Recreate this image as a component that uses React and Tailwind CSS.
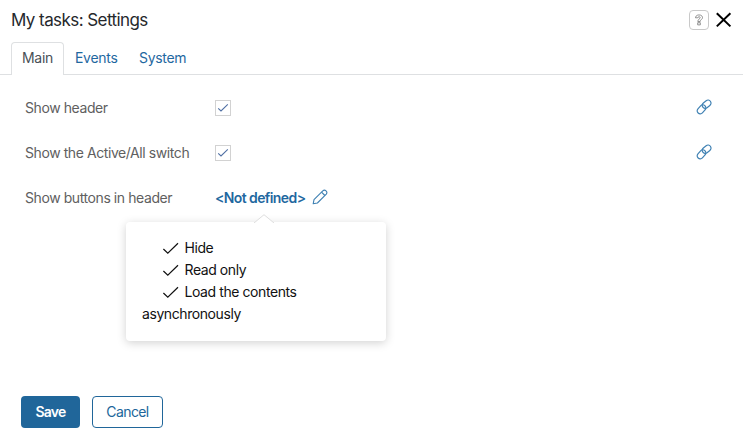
import React from "react";

function Checkbox() {
  return (
    <span className="flex h-4 w-4 items-center justify-center border border-[#d2d2d2] bg-white">
      <svg width="12" height="12" viewBox="0 0 12 12" fill="none" stroke="#5070a4" strokeWidth="1.1">
        <path d="M1.2 6.3 4 9 10.8 2.3" />
      </svg>
    </span>
  );
}

function LinkIcon() {
  return (
    <svg className="-mt-0.5" width="16" height="16" viewBox="0 0 16 16" fill="none" stroke="#3f81b3" strokeWidth="1.2">
      <rect x="-5" y="-3" width="10" height="6" rx="3" transform="translate(5.5 10.3) rotate(-48)" />
      <rect x="-4.8" y="-3" width="9.6" height="6" rx="3" transform="translate(10.6 5.2) rotate(-38)" />
    </svg>
  );
}

function PencilIcon() {
  return (
    <svg className="-mt-0.5" width="16" height="16" viewBox="0 0 16 16" fill="none" stroke="#3f81b3" strokeWidth="1.1" strokeLinejoin="round">
      <path d="M1.2 14.8 2 10.6 10.8 1.8Q12.4.3 14 1.8T14.3 5.1L5.4 14Z" />
      <path d="M9.5 3.1 12.9 6.5" />
    </svg>
  );
}

function Tick() {
  return (
    <svg className="mr-[5.5px] ml-5 inline-block align-[-3px]" width="17" height="14" viewBox="0 0 17 14" fill="none" stroke="#111" strokeWidth="1.2">
      <path d="M1.4 7 5.8 11.2 16 1.2" />
    </svg>
  );
}

function Row({ label, children, link }) {
  return (
    <div className="flex h-[45px] items-center pr-[31px] pl-[25px]">
      <span className="w-[190px] whitespace-nowrap">{label}</span>
      <div className="flex flex-1 items-center">{children}</div>
      {link && <LinkIcon />}
    </div>
  );
}

export default function App() {
  return (
    <div className="flex h-[437px] w-[743px] flex-col overflow-hidden bg-white font-['Inter',sans-serif] text-sm tracking-[-0.42px] text-[#606060]">
      <header className="flex h-[42px] items-center justify-between pr-[11px] pb-1 pl-[11px]">
        <h1 className="pt-0.5 text-[17px] tracking-[-0.57px] text-[#25282c]">My tasks: Settings</h1>
        <div className="flex items-center gap-[7px] pt-0.5">
          <span className="flex h-5 w-5 items-center justify-center rounded border border-[#c9c9c9]">
            <svg width="10" height="12" viewBox="0 0 10 12" fill="none" stroke="#666" strokeWidth=".7">
              <path d="M1.5 3.8C1.5 0 8.5 0 8.5 3.5 8.5 5.5 6.2 5.5 6.2 7.5H3.8C3.8 5.3 6.2 4.7 6.2 3.6 6.2 2.5 3.8 2.5 3.8 3.8ZM3.7 8.7H6.3V10.9H3.7Z" />
            </svg>
          </span>
          <svg width="16" height="16" viewBox="0 0 16 16" fill="none" stroke="#000" strokeWidth="2">
            <path d="M.8 1.2 14.4 14.4M14.4 1.2.8 14.4" />
          </svg>
        </div>
      </header>
      <nav className="flex h-[33px] border-b border-[#dee0e2] pl-[11px] tracking-[-0.3px] text-[#1f689f]">
        <span className="flex h-[33px] w-[53px] items-center justify-center rounded-t border border-b-0 border-[#dee0e2] bg-white pb-0.5 text-[#495057]">Main</span>
        <span className="flex h-8 items-center pl-[11px]">Events</span>
        <span className="flex h-8 items-center pl-[21.5px]">System</span>
      </nav>
      <main className="flex-1 pt-[10px]">
        <Row label="Show header" link><Checkbox /></Row>
        <Row label="Show the Active/All switch" link><Checkbox /></Row>
        <Row label="Show buttons in header">
          <div className="relative flex items-center gap-[7px] text-[#1f689f]">
            <span className="font-semibold tracking-[-0.6px]">&lt;Not defined&gt;</span>
            <PencilIcon />
            <div className="absolute top-[34px] -left-[89px] h-[119px] w-[260px] rounded bg-white px-4 pt-[15px] leading-[22px] text-[#111] shadow-[0_2px_10px_rgba(0,0,0,0.18)]">
              <svg className="absolute -top-[8px] left-[128px]" width="20" height="9" viewBox="0 0 20 9">
                <path d="M0 9 10 .7 20 9" fill="#fff" stroke="#dedede" />
              </svg>
              <div><Tick />Hide</div>
              <div><Tick />Read only</div>
              <div><Tick />Load the contents<br />asynchronously</div>
            </div>
          </div>
        </Row>
      </main>
      <footer className="flex gap-3 pb-[9px] pl-[21px]">
        <button className="h-8 w-[59px] rounded bg-[#20669a] font-semibold tracking-[-0.75px] text-white">Save</button>
        <button className="h-8 w-[71px] rounded border border-[#20669a] tracking-[-0.6px] text-[#20669a]">Cancel</button>
      </footer>
    </div>
  );
}
